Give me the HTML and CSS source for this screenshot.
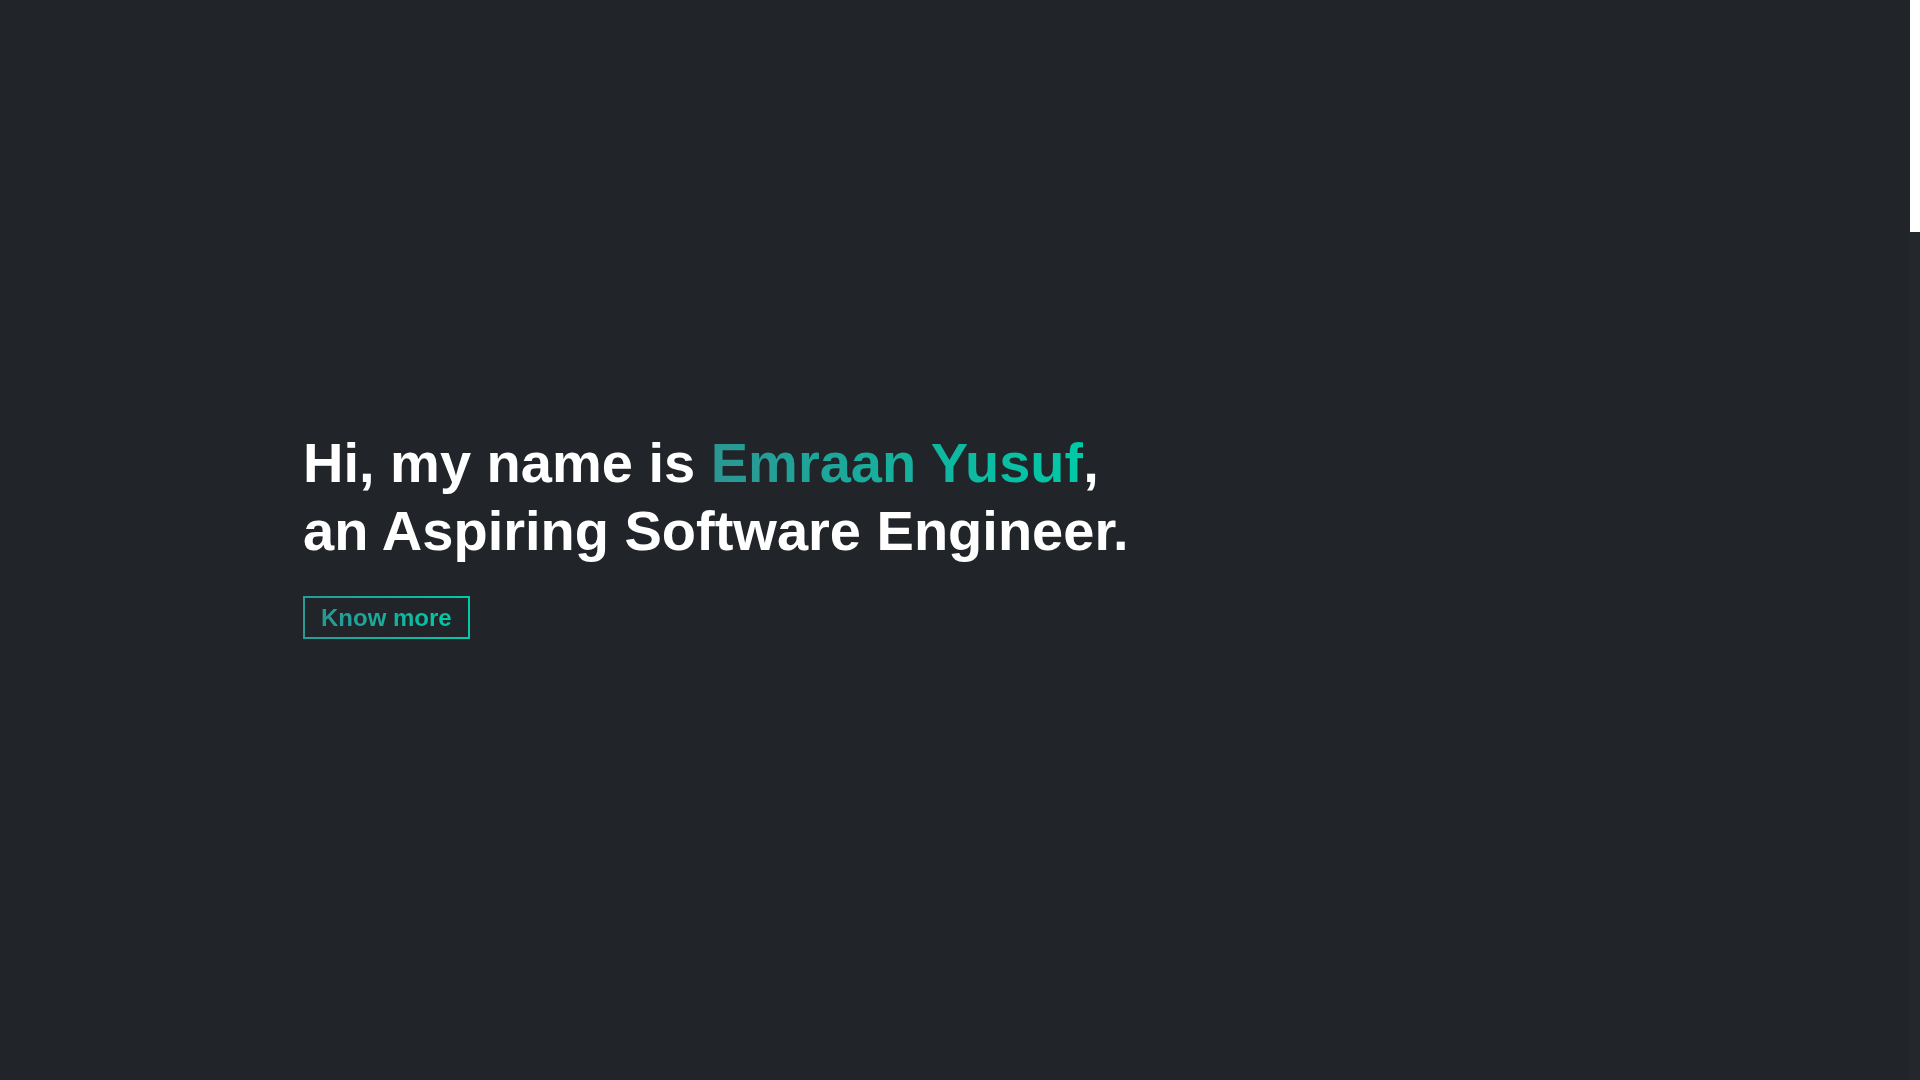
FILE: index.html
```html
<!DOCTYPE html>
<html lang="en">
<head>
  <meta charset="UTF-8">
  <title>Emraan Yusuf</title>
  <meta name="viewport" content="width=device-width, initial-scale=1.0" />
  <link rel="stylesheet" href="styles.css">
</head>
<body>

  <!-- Hero -->
  <section class="hero" id="home">
    <div class="hero-content">
      <h1 class="hero-title">
        Hi, my name is <span class="highlight">Emraan Yusuf</span>,<br>
        an Aspiring Software Engineer.
      </h1>
      <a href="#about" class="btn-outline"><span class="highlight">Know more</span></a>
    </div>
  </section>

  <!-- Scroll bar -->
  <div class="scroll-track">
    <div class="scroll-thumb"></div>
  </div>

</body>
</html>
```

FILE: styles.css
```css
* { box-sizing: border-box; }

body {
  font-family: "Liberation Sans", Arial, sans-serif;
  background-color: #212529;
  color: #fff;
  margin: 0;
  padding: 0;
}

/* Hero */
.hero {
  min-height: 100vh;
  display: flex;
  align-items: center;
  padding: 0 0 12px 303px;
}

.hero-title {
  margin: 0 0 32px;
  font-size: 56px;
  line-height: 1.2;
  font-weight: bold;
}

.highlight {
  background: linear-gradient(to right, #2b9693, #00caa7);
  -webkit-background-clip: text;
  background-clip: text;
  color: transparent;
}

.btn-outline {
  display: inline-block;
  padding: 6px 16px;
  font-size: 24px;
  line-height: 27px;
  font-weight: bold;
  text-decoration: none;
  border: 2px solid;
  border-image: linear-gradient(to right, #2b9a97, #00caa7) 1;
}

/* Custom scroll bar */
.scroll-track {
  position: fixed;
  top: 0;
  right: 0;
  width: 10px;
  height: 100vh;
  background-color: #24272b;
}

.scroll-thumb {
  height: 232px;
  background-color: #fff;
}
```
